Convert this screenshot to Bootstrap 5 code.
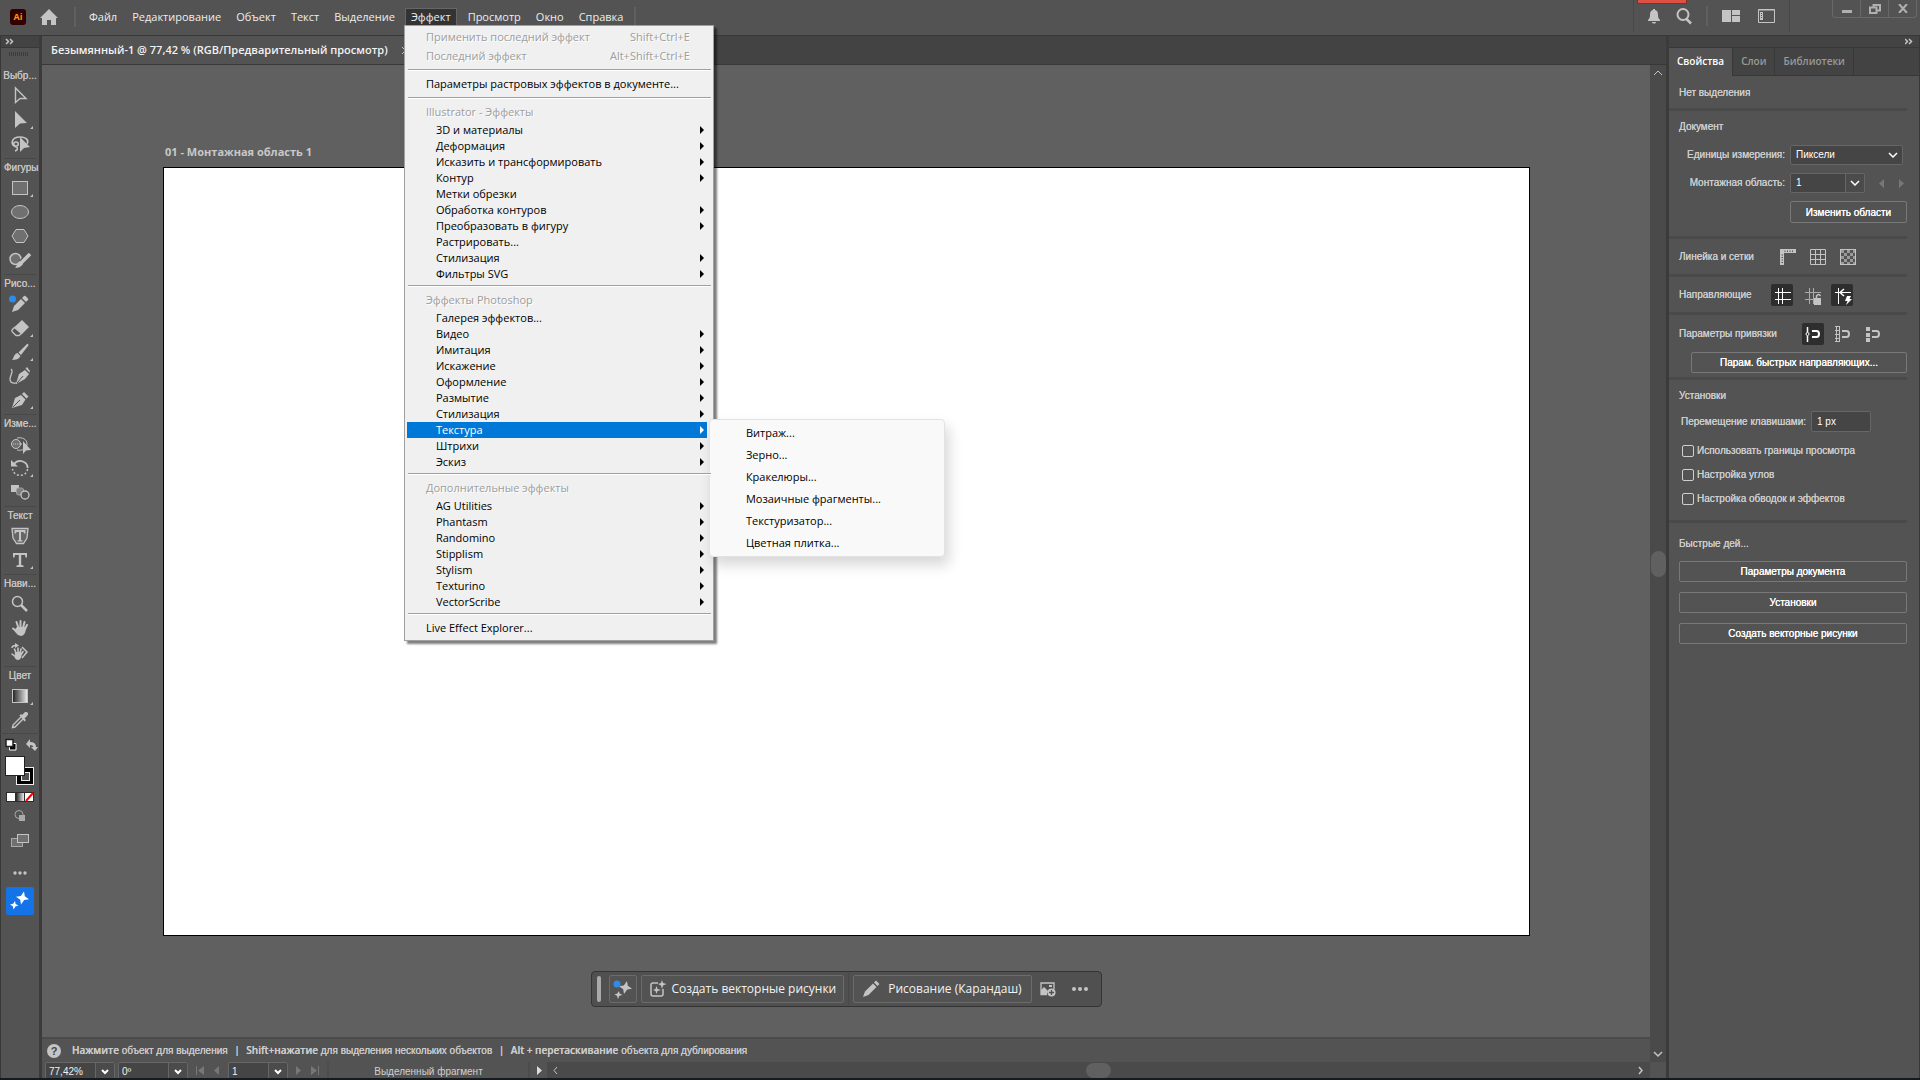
<!DOCTYPE html>
<html lang="ru">
<head>
<meta charset="utf-8">
<meta name="viewport" content="width=device-width, initial-scale=1">
<title>Безымянный-1 @ 77,42 %</title>
<link rel="stylesheet" href="https://cdn.jsdelivr.net/npm/bootstrap@5.3.0/dist/css/bootstrap.min.css">
<style>
:root{--ui:"Open Sans","Noto Sans",sans-serif;--small:"Liberation Sans",Arial,sans-serif;--face:#535353;--dark:#434343;--line:#383838;--ink:#c4c4c4}
body{font:11px/16px var(--ui);background:var(--face);color:var(--ink);height:100vh;overflow:hidden;border-bottom:2px solid #141a1e}
svg{display:block;flex:none}
a{color:inherit;text-decoration:none}
button,select,input{font:inherit;color:inherit;border-radius:0}
.plain-btn{background:none;border:0;padding:0}
.ink{fill:var(--ink)}
.wire{fill:none;stroke:var(--ink)}

/* top bar */
.topbar{height:36px;padding:0 3px 2px 10px;border-bottom:1px solid var(--line);flex-wrap:nowrap}
.home-btn{margin-left:14px}
.nav-main{margin-left:5px}
.topbar .nav-link{color:#eee;padding:0 7px;height:17px;line-height:15px;border:1px solid transparent;margin-right:-1px}
.topbar .nav-link.active{background:#333;border-color:#666;border-bottom:0;padding:0 5px;margin:0 3px 0 3px}
.vline{width:2px;height:20px;background:#606060}
.vline.tall{width:1px;height:32px;background:#484848}
.right-tools{gap:14px}
.right-tools .vline.tall:last-of-type{margin-left:-4px}
.alert-strip{position:absolute;width:50px;height:4px;background:#dc5142;border:1px solid #8f2a20;border-top:0;left:4px;top:0}
.win-btns{height:18px;border:1px solid #696969;border-top:0;border-radius:0 0 4px 4px;margin-left:28px}
.win-btns button{width:27px}
.win-btns button+button{border-left:1px solid #696969;width:28px}

/* effect menu */
.fx-menu{position:absolute;top:17px;left:2px;z-index:20;width:310px;background:#f0f0f0;color:#000;border:1px solid #a0a0a0;padding:2px 6px 2px 2px;box-shadow:3px 3px 2px rgba(0,0,0,.5);list-style:none;margin:0}
.fx-menu li{position:relative}
.fx-menu a{display:flex;justify-content:space-between;align-items:center;height:16px;line-height:16px;padding:0 3px 0 29px;color:#000}
.fx-menu a.root,.fx-menu .cap{padding-left:19px;height:20px;line-height:20px}
.fx-menu .cap,.fx-menu a.off{color:#9d9d9d;text-shadow:1px 1px #fff}
.fx-menu a.off{height:19px;align-items:flex-start;padding:1px 17px 0 19px}
.fx-menu .rule{height:8px;margin:0 -4px 0 1px;padding-top:3px}
.fx-menu .rule::after{content:"";display:block;height:2px;background:#a0a0a0;border-bottom:1px solid #fff}
.fx-menu .sub::after{content:"";border:4px solid transparent;border-left-color:#000;border-right:0}
.fx-menu a.hot{background:#0078d7;color:#fff}
.fx-menu a.hot::after{border-left-color:#fff}
.fx-sub{position:absolute;left:calc(100% + 2px);top:-3px;width:236px;background:#f9f9f9;border:1px solid #e2e2e2;border-radius:4px;padding:2px 0;box-shadow:4px 8px 14px rgba(0,0,0,.16);list-style:none}
.fx-sub a{height:22px;line-height:22px;padding-left:36px}

/* tool column */
.toolcol{width:42px;border-left:1px solid var(--line);border-right:3px solid #3b3b3b}
.strip{height:12px;background:var(--dark);border-bottom:1px solid var(--line)}
.grip{height:4px;width:20px;background:repeating-linear-gradient(90deg,#3c3c3c 0 1px,transparent 1px 2px)}
.tgroup{margin:0 -1px}
.tgroup h2{font:10px/17px var(--small);margin:2px 4px 0;border-top:1px solid #484848;text-align:center;text-shadow:0 0 currentColor;white-space:nowrap}
.tgroup.first h2{border-top:0;margin:12px 0 0;line-height:16px}
.tgroup button{display:block;width:40px;height:24px}
.swatches{margin-top:1px;border-top:1px solid #484848}
.ai-btn{width:28px;height:28px;background:#1473e6;border:0;border-radius:2px;padding:0;margin-left:5px}

/* document */
.tabbar{height:29px;background:var(--dark);border-bottom:1px solid var(--line)}
.doc-tab{background:var(--face);width:374px;color:#f2f2f2;font-weight:600;padding-left:9px;gap:14px}
.canvas{background:#606060;padding:79px 120px 30px 121px}
.ab-label{height:16px;margin:0 0 7px 2px;font-weight:700;color:#c8c8c8}
.artboard{background:#fff;border:1px solid #000}
.taskbar{height:36px;margin-top:35px;background:#505050;border:1px solid #343434;border-radius:4px;padding:0 13px 0 5px;color:#f2f2f2;font-size:12px}
.taskbar .tb{height:28px;background:#535353;border:1px solid #6b6b6b;border-radius:2px;padding:0 9px}
.taskbar .tb.slim{padding:0 3px}
.taskbar .tb.mid{padding:0 7px}
.vscroll{width:16px;background:#4a4a4a;padding:4px 0 2px}
.thumb-v{width:15px;height:26px;border-radius:8px;background:#606060}
.helpbar{height:25px;border-top:2px solid #4a4a4a;font:10px/12px var(--small);color:#cacaca;padding-left:4px;text-shadow:0 0 currentColor}
.helpbar svg{margin-right:2px}
.helpbar b{font-family:var(--ui);font-weight:600}
.statusbar{height:16px;overflow:hidden;font:10px/12px var(--small);color:#f0f0f0}
.status-fields{padding-left:3px;gap:3px}
.fieldset{height:20px;border:1px solid #666;border-radius:2px;background:#454545;overflow:hidden;position:relative}
.fieldset select,.fieldset input{appearance:none;background:none;border:0;outline:0;padding:0 20px 0 5px;width:100%;height:100%}
.fieldset .arr{position:absolute;right:0;top:0;width:19px;height:100%;border-left:1px solid #666;background:#4b4b4b;pointer-events:none;display:flex;align-items:center;justify-content:center}
.fieldset.flush .arr{border:0;background:none}
.statusbar .fieldset select{padding-left:3px}
.w-zoom{width:70px}.w-rot{width:70px}.w-page{width:60px}
.frag{width:203px;border:1px solid #4c4c4c;border-width:0 2px;height:20px;line-height:20px;color:#d0d0d0;text-align:center}
.hscroll{background:#4a4a4a;height:16px;padding:0 5px}
.thumb-h{width:25px;height:15px;border-radius:8px;background:#606060}
.corner{width:16px}

/* properties panel */
.props{width:254px;border-left:3px solid #3b3b3b;border-right:1px solid var(--line);font:10px/14px var(--small)}
.props .strip{padding-right:6px}
.ptabs{height:28px;background:var(--dark);font:600 10px/26px var(--ui);color:#9a9a9a;border-bottom:1px solid var(--line)}
.ptabs a{padding:0 8px;border-right:1px solid var(--line)}
.ptabs a.on{background:var(--face);color:#fff;height:28px}
.pbody{margin-right:12px;text-shadow:0 0 currentColor;color:#cdcdcd}
.psec{padding-left:10px;border-bottom:3px solid #4a4a4a}
.psec h2{font:inherit;margin:0;height:14px}
.lbl{width:106px;text-align:right;margin-right:5px;white-space:nowrap}
.psec .fieldset{color:#fff}
.obtn{background:none;border:1px solid #787878;border-radius:2px;color:#fff;height:21px;padding:0;text-shadow:inherit;line-height:19px}
.tog{width:22px;height:22px;border-radius:2px}
.tog.on{background:#2e2e2e}
.chk{height:24px;display:flex;align-items:center;gap:3px;margin:0 0 0 3px}
.chk input{appearance:none;width:12px;height:12px;border:1px solid #cfcfcf;border-radius:2px;margin:0}
.sec-sel{padding-top:10px;padding-bottom:8px}
.sec-doc{padding-top:9px;padding-bottom:13px}
.sec-doc h2{margin-bottom:11px}
.sec-doc>div+div{margin-top:8px}
.abfield{width:75px}
.wide-b{width:117px;height:22px}
.irow{height:38px}
.icons-a{margin-right:48px}
.icons-b{margin-right:54px}
.icons-c{margin-right:23px}
.snaprow{height:37px}
.snap-b{width:216px}
.sec-snap{padding-bottom:4px}
.sec-set{padding-top:9px;padding-bottom:9px}
.lbl.kb{width:127px;margin-right:5px}
.kbf{width:60px;height:21px}
.chks{padding-top:7px}
.quick{padding-top:14px;gap:10px}
</style>
<script src="https://cdn.jsdelivr.net/npm/bootstrap@5.3.0/dist/js/bootstrap.bundle.min.js"></script>
</head>
<body class="d-flex flex-column">

<header class="topbar navbar d-flex align-items-center justify-content-start">
  <svg width="16" height="16" viewBox="0 0 16 16" role="img" aria-label="Ai"><rect width="16" height="16" rx="3" fill="#330000"/><text x="8" y="11" text-anchor="middle" font-family="Open Sans" font-weight="700" font-size="9" fill="#ff9a00">Ai</text></svg>
  <button class="plain-btn home-btn" aria-label="Главная"><svg width="18" height="16" viewBox="0 0 18 16"><path class="ink" d="M9 0L18 9H16V16H11V11H7V16H2V9H0Z"/></svg></button>
  <div class="vline ms-3"></div>
  <nav class="d-flex nav-main" aria-label="Меню">
    <a class="nav-link" href="#">Файл</a>
    <a class="nav-link" href="#">Редактирование</a>
    <a class="nav-link" href="#">Объект</a>
    <a class="nav-link" href="#">Текст</a>
    <a class="nav-link" href="#">Выделение</a>
    <div class="position-relative">
      <a class="nav-link active" href="#">Эффект</a>
      <ul class="fx-menu">
        <li><a class="off" href="#"><span>Применить последний эффект</span><span>Shift+Ctrl+E</span></a></li>
        <li><a class="off" href="#"><span>Последний эффект</span><span>Alt+Shift+Ctrl+E</span></a></li>
        <li class="rule"></li>
        <li><a class="root" href="#">Параметры растровых эффектов в документе...</a></li>
        <li class="rule"></li>
        <li class="cap">Illustrator - Эффекты</li>
        <li><a class="sub" href="#">3D и материалы</a></li>
        <li><a class="sub" href="#">Деформация</a></li>
        <li><a class="sub" href="#">Исказить и трансформировать</a></li>
        <li><a class="sub" href="#">Контур</a></li>
        <li><a href="#">Метки обрезки</a></li>
        <li><a class="sub" href="#">Обработка контуров</a></li>
        <li><a class="sub" href="#">Преобразовать в фигуру</a></li>
        <li><a href="#">Растрировать...</a></li>
        <li><a class="sub" href="#">Стилизация</a></li>
        <li><a class="sub" href="#">Фильтры SVG</a></li>
        <li class="rule"></li>
        <li class="cap">Эффекты Photoshop</li>
        <li><a href="#">Галерея эффектов...</a></li>
        <li><a class="sub" href="#">Видео</a></li>
        <li><a class="sub" href="#">Имитация</a></li>
        <li><a class="sub" href="#">Искажение</a></li>
        <li><a class="sub" href="#">Оформление</a></li>
        <li><a class="sub" href="#">Размытие</a></li>
        <li><a class="sub" href="#">Стилизация</a></li>
        <li><a class="sub hot" href="#">Текстура</a>
          <ul class="fx-sub">
            <li><a href="#">Витраж...</a></li>
            <li><a href="#">Зерно...</a></li>
            <li><a href="#">Кракелюры...</a></li>
            <li><a href="#">Мозаичные фрагменты...</a></li>
            <li><a href="#">Текстуризатор...</a></li>
            <li><a href="#">Цветная плитка...</a></li>
          </ul>
        </li>
        <li><a class="sub" href="#">Штрихи</a></li>
        <li><a class="sub" href="#">Эскиз</a></li>
        <li class="rule"></li>
        <li class="cap">Дополнительные эффекты</li>
        <li><a class="sub" href="#">AG Utilities</a></li>
        <li><a class="sub" href="#">Phantasm</a></li>
        <li><a class="sub" href="#">Randomino</a></li>
        <li><a class="sub" href="#">Stipplism</a></li>
        <li><a class="sub" href="#">Stylism</a></li>
        <li><a class="sub" href="#">Texturino</a></li>
        <li><a class="sub" href="#">VectorScribe</a></li>
        <li class="rule"></li>
        <li><a class="root" href="#">Live Effect Explorer...</a></li>
      </ul>
    </div>
    <a class="nav-link" href="#">Просмотр</a>
    <a class="nav-link" href="#">Окно</a>
    <a class="nav-link" href="#">Справка</a>
  </nav>
  <div class="vline ms-1"></div>
  <div class="right-tools d-flex align-items-center align-self-start ms-auto position-relative">
    <span class="alert-strip"></span>
    <div class="vline tall"></div>
    <button class="plain-btn" aria-label="Уведомления"><svg width="12" height="15" viewBox="0 0 12 15"><path class="ink" d="M5 0H7V1C9 1.5 10 3 10 5.5C10 8.500 10.500 9.500 12 11V12H0V11C1.500 9.500 2 8.500 2 5.500C2 3 3 1.500 5 1ZM4 13H8C8 15 4 15 4 13Z"/></svg></button>
    <button class="plain-btn" aria-label="Поиск"><svg width="18" height="17" viewBox="0 0 18 17"><circle class="wire" cx="9" cy="6.500" r="5.500" stroke-width="2"/><path class="wire" d="M12 10.500L17 15.500" stroke-width="2.500"/></svg></button>
    <div class="vline"></div>
    <button class="plain-btn" aria-label="Упорядочить документы"><svg width="18" height="12" viewBox="0 0 18 12"><path class="ink" d="M0 0H9V12H0ZM10 0H18V5H10ZM10 6H18V12H10Z"/></svg></button>
    <button class="plain-btn ps-1" aria-label="Рабочая среда"><svg width="17" height="14" viewBox="0 0 17 14"><path class="wire" d="M.5 .5H16.500V13.500H.5Z" stroke-width="1"/><path class="wire" d="M.5 1H16.500"/><path class="ink" d="M2 3H5V11H2Z"/><path d="M3 4h1v1h-1zM3 6h1v1h-1zM3 8h1v1h-1z" fill="#535353"/></svg></button>
    <div class="vline tall"></div>
    <div class="win-btns d-flex align-self-start">
      <button class="plain-btn d-flex justify-content-center align-items-center" aria-label="Свернуть"><svg width="10" height="10" viewBox="0 0 10 10"><path fill="#b0b0b0" d="M0 6H10V9H0Z"/></svg></button>
      <button class="plain-btn d-flex justify-content-center align-items-center" aria-label="Окно"><svg width="12" height="10" viewBox="0 0 12 10"><path d="M4.500 3V1H11V6.500H7.500M1 3.500H7.500V9H1Z" fill="none" stroke="#b0b0b0" stroke-width="2"/></svg></button>
      <button class="plain-btn d-flex justify-content-center align-items-center" aria-label="Закрыть"><svg width="10" height="9" viewBox="0 0 10 9"><path d="M1 0L9 9M9 0L1 9" fill="none" stroke="#b0b0b0" stroke-width="2"/></svg></button>
    </div>
  </div>
</header>

<div class="d-flex flex-grow-1 overflow-hidden">

  <aside class="toolcol flex-shrink-0 d-flex flex-column">
    <div class="strip"><svg width="14" height="11" viewBox="0 0 14 11"><path class="wire" d="M5 3L7.500 5.500 5 8M9 3L11.500 5.500 9 8" stroke-width="1.500"/></svg></div>
    <div class="grip mt-1 ms-2"></div>
    <section class="tgroup first"><h2>Выбр...</h2>
      <button class="plain-btn" aria-label="Выделение"><svg width="40" height="24"><path class="wire" stroke-width="1.400" d="M15.500 4V18.500L20 14.500H26Z"/></svg></button>
      <button class="plain-btn" aria-label="Прямое выделение"><svg width="40" height="24"><path class="ink" d="M15 3V20L20 15.500 27 15ZM33 18v3h-3z"/></svg></button>
      <button class="plain-btn" aria-label="Лассо"><svg width="40" height="24"><path class="wire" stroke-width="1.600" d="M16 15C10 13 11 5 20 5C27 5 29 9 27 12M16 10C13 10 13 14 16 14C19 14 19 10 16 10M16 14C18 16 18 18 15 19"/><path class="ink" d="M20 5V20L24 16 30 15Z"/></svg></button>
    </section>
    <section class="tgroup"><h2>Фигуры</h2>
      <button class="plain-btn" aria-label="Прямоугольник"><svg width="40" height="24"><rect x="12.500" y="5.500" width="15" height="13" fill="#707070" stroke="#c4c4c4"/><path class="ink" d="M33 18v3h-3z"/></svg></button>
      <button class="plain-btn" aria-label="Эллипс"><svg width="40" height="24"><ellipse cx="20" cy="12" rx="8.500" ry="6.500" fill="#707070" stroke="#c4c4c4"/></svg></button>
      <button class="plain-btn" aria-label="Многоугольник"><svg width="40" height="24"><path d="M12 12L16 5.500H24L28 12 24 18.500H16Z" fill="#707070" stroke="#c4c4c4"/></svg></button>
      <button class="plain-btn" aria-label="Shaper"><svg width="40" height="24"><circle cx="15.500" cy="11" r="5.500" fill="#707070" stroke="#c4c4c4" stroke-width="1.500"/><path d="M30 6L21 15" stroke="#535353" stroke-width="6"/><path d="M30 6L21 15" stroke="#c4c4c4" stroke-width="3.500"/><path class="ink" d="M20 13L23 16C21 19 18 20 15 20C17 18 17 15 20 13Z"/></svg></button>
    </section>
    <section class="tgroup"><h2>Рисо...</h2>
      <button class="plain-btn" aria-label="Карандаш"><svg width="40" height="24"><path class="ink" d="M12 20L14 14 21 7 25 11 18 18ZM22 6L24 4Q25 3.500 26 4.500L28 6.500Q28.500 7.500 28 8L26 10Z"/><circle cx="12.500" cy="7" r="3.500" fill="#2d8ceb"/></svg></button>
      <button class="plain-btn" aria-label="Ластик"><svg width="40" height="24"><path class="ink" d="M22 4L29 11 22 18 14.500 11Z"/><path class="wire" stroke-width="1.300" d="M14.500 11.500L12 14Q11.500 15 12.500 16L16 19.500H19L21.500 17.500Z"/><path class="ink" d="M33 18v3h-3z"/></svg></button>
      <button class="plain-btn" aria-label="Кисть"><svg width="40" height="24"><path class="ink" d="M28 4Q29 5 28 6L21 15 18.500 12.500 26.500 4.500Q27.500 3.500 28 4ZM17.500 13L20.500 16C19 19 16 20 12 20C14 18 13.500 14 17.500 13ZM33 18v3h-3z"/></svg></button>
      <button class="plain-btn" aria-label="Кривизна"><svg width="40" height="24"><path class="ink" d="M16 20L19 10 25 6 29 10 25 15ZM25.500 4.500L27 3 30 7 29.500 8.500Z"/><path d="M17 19L23 12" stroke="#535353"/><path class="wire" stroke-width="1.300" d="M11 5C15 8 7 14 11 18C13 20 15 19 17 19"/></svg></button>
      <button class="plain-btn" aria-label="Перо"><svg width="40" height="24"><path class="ink" d="M12 20L15 10 21 7 25.500 11.500 22 17ZM22 6L24 4 28.500 8.500 26.500 10.500ZM33 18v3h-3z"/><path d="M13 19L20 12" stroke="#535353"/></svg></button>
    </section>
    <section class="tgroup"><h2>Изме...</h2>
      <button class="plain-btn" aria-label="Создание фигур"><svg width="40" height="24"><circle cx="16" cy="12" r="4.500" fill="#707070" stroke="#c4c4c4"/><path class="wire" d="M17 6C22 5 27 7 27 12C27 17 22 19 17 18"/><path class="wire" stroke-dasharray="1 1" d="M13 12H23"/><path class="ink" d="M23 9V22L26 18.500 31 18Z"/></svg></button>
      <button class="plain-btn" aria-label="Поворот"><svg width="40" height="24"><path class="wire" stroke-width="1.800" d="M14 8C19 2 28 6 27.500 12"/><path class="wire" stroke-width="1.500" stroke-dasharray="2 2" d="M27.500 13C27 21 14 22 12.500 13"/><path class="ink" d="M11 4V10.500H18ZM33 18v3h-3z"/></svg></button>
      <button class="plain-btn" aria-label="Переход"><svg width="40" height="24"><path class="ink" d="M11 5H19V12H11Z"/><rect x="16.500" y="8" width="7" height="7" rx="2" fill="#808080" stroke="#a0a0a0"/><circle cx="25" cy="15" r="4" fill="#535353" stroke="#c4c4c4" stroke-width="1.300"/></svg></button>
    </section>
    <section class="tgroup"><h2>Текст</h2>
      <button class="plain-btn" aria-label="Изменение текста"><svg width="40" height="24"><path d="M12 4.500H28L27 14 23.500 19.500H16.500L13 14Z" fill="#666" stroke="#c4c4c4" stroke-width="1.300"/><path class="ink" d="M14.500 6H25.500V9.500H24L23.500 8H21V16L22.500 16.500V17.500H17.500V16.500L19 16V8H16.500L16 9.500H14.500Z"/></svg></button>
      <button class="plain-btn" aria-label="Текст"><svg width="40" height="24"><path class="ink" d="M13 5H27V9.500H25.500L25 7H21.200V17L23.500 17.500V19H16.500V17.500L18.800 17V7H15L14.500 9.500H13ZM33 18v3h-3z"/></svg></button>
    </section>
    <section class="tgroup"><h2>Нави...</h2>
      <button class="plain-btn" aria-label="Масштаб"><svg width="40" height="24"><circle class="wire" cx="17.500" cy="9.500" r="5" stroke-width="1.500"/><path class="wire" stroke-width="2.500" d="M21 13L27 19"/></svg></button>
      <button class="plain-btn" aria-label="Рука"><svg width="40" height="24"><path d="M18.500 12L16.500 6M20.500 11L20.500 5M23 12L24.500 6M25 13L27 9M16.500 15L13 12.500" stroke="#c4c4c4" stroke-width="2" stroke-linecap="round"/><path class="ink" d="M17 11H25L26 13Q25 20 21 20Q18 20 16 17L14 14.500Z"/></svg></button>
      <button class="plain-btn" aria-label="Поворот вида"><svg width="40" height="24"><path d="M16 13L14.500 9M18 12V8M20 13L21 9M21.500 14L23 11.500M14.500 16L12 14" stroke="#c4c4c4" stroke-width="1.600" stroke-linecap="round"/><path class="ink" d="M15 12H21L22 14Q21 20 18 20Q16 20 14.500 17.500ZM15 3L19 5.500 15 8Z"/><path class="wire" stroke-width="1.500" d="M12 8Q12 5.500 16 5.500M22 7L27 12 22 18"/></svg></button>
    </section>
    <section class="tgroup"><h2>Цвет</h2>
      <button class="plain-btn" aria-label="Градиент"><svg width="40" height="24"><defs><linearGradient id="gr"><stop stop-color="#222"/><stop offset="1" stop-color="#eee"/></linearGradient></defs><rect x="12.500" y="5.500" width="15" height="13" fill="url(#gr)" stroke="#c4c4c4"/><path class="ink" d="M33 18v3h-3z"/></svg></button>
      <button class="plain-btn" aria-label="Пипетка"><svg width="40" height="24"><path class="wire" stroke-width="1.400" d="M21 9L13 17 12.500 19.500 15 19 23 11"/><path class="ink" d="M19.500 7.500L21 6 22 7 25 4Q27 3.500 28 5Q28.500 6.500 27 8L24.500 10.500 26 12 24.500 13.500Z"/></svg></button>
    </section>
    <section class="tgroup swatches">
      <svg width="40" height="153" viewBox="0 735 40 153" role="img" aria-label="Заливка и обводка">
        <path d="M9.500 744.500H16V751H9.500Z" fill="#000" stroke="#fff"/><path d="M6 740.500H13V747.500H6Z" fill="#fff" stroke="#222" stroke-width="1.500"/>
        <path class="ink" d="M26 745L30 740V743Q36 743 36 748H38L35 752 31 748H33.500Q33 746 30 746V749Z"/>
        <rect x="16.500" y="768.500" width="17" height="17" fill="#000" stroke="#eee"/><rect x="21.500" y="773.500" width="8" height="8" fill="#535353" stroke="#eee"/>
        <rect x="5.500" y="757.500" width="19" height="19" fill="#fff" stroke="#222"/>
        <rect x="6" y="793" width="28" height="10" fill="#2c2c2c"/><path fill="#fff" d="M7 794h8v8H7zM25 794h8v8h-8z"/><rect x="16" y="794" width="8" height="8" fill="url(#gr)"/><path d="M26 802L33 794" stroke="red" stroke-width="2"/>
        <circle cx="19" cy="815.500" r="4" fill="none" stroke="#aaa"/><rect x="19" y="816" width="6" height="6" fill="#aaa"/>
        <rect x="11.500" y="839.500" width="11" height="8" fill="#707070" stroke="#aaa"/><rect x="17.500" y="835.500" width="11" height="8" fill="#707070" stroke="#c4c4c4"/>
        <g fill="#c4c4c4"><circle cx="15" cy="874" r="1.700"/><circle cx="20" cy="874" r="1.700"/><circle cx="25" cy="874" r="1.700"/></g>
      </svg>
    </section>
    <button class="ai-btn" aria-label="Генерация"><svg width="28" height="28" viewBox="0 0 28 28"><path fill="#fff" d="M18 4.500L18.800 9.200 23 12.200 18.200 13 15 17.500 14.200 12.800 10 9.800 14.800 9ZM9 14L9.600 17 12.500 18.600 9.400 19.400 7.500 22.500 6.800 19.300 4 17.500 7.200 16.800Z"/></svg></button>
  </aside>

  <main class="flex-grow-1 d-flex flex-column overflow-hidden">
    <div class="tabbar d-flex flex-shrink-0">
      <div class="doc-tab d-flex align-items-center"><span>Безымянный-1 @ 77,42 % (RGB/Предварительный просмотр)</span><svg width="7" height="7" viewBox="0 0 7 7"><path class="wire" d="M0 0L7 7M7 0L0 7"/></svg></div>
    </div>
    <div class="d-flex flex-grow-1">
      <div class="flex-grow-1 d-flex flex-column">
        <div class="canvas flex-grow-1 d-flex flex-column">
          <div class="ab-label">01 - Монтажная область 1</div>
          <div class="artboard flex-grow-1"></div>
          <div class="taskbar d-flex align-items-center align-self-center">
            <svg width="4" height="26"><rect width="4" height="26" rx="2" fill="#aaa"/></svg>
            <button class="tb slim ms-2 d-flex align-items-center" aria-label="Контекст"><svg width="20" height="24" viewBox="0 0 20 24"><path class="ink" d="M14 4L14.800 8.700 19 11.700 14.200 12.500 11 17 10.200 12.300 6 9.300 10.800 8.500ZM6 14L6.600 16.500 9.500 18 6.400 18.800 5 22 4 18.800 1.500 17.500 4.300 16.500Z"/><circle cx="4" cy="7" r="3.500" fill="#2d8ceb"/></svg></button>
            <button class="tb mid ms-1 d-flex align-items-center gap-1"><svg width="18" height="18" viewBox="0 0 18 18"><path class="wire" stroke-width="1.500" d="M9 3H4Q2 3 2 5V14Q2 16 4 16H12Q14 16 14 14V9"/><path class="ink" d="M13 0L14 3 17.500 4 14 5.500 13 9 12 5.500 9 4 12 3ZM7.500 6L8.500 9 12 10 8.500 11 7.500 14 6.500 11 4 10 6.500 9Z"/></svg>Создать векторные рисунки</button>
            <div class="vline tall mx-1"></div>
            <button class="tb d-flex align-items-center gap-2"><svg width="17" height="18" viewBox="0 0 17 18"><path class="ink" d="M0 17L2 11.500 10 3.500 13.500 7 5.500 15ZM11 2.500L13 .5 16.500 4 14.500 6Z"/></svg>Рисование (Карандаш)</button>
            <button class="plain-btn ms-2" aria-label="Добавить изображение"><svg width="16" height="15" viewBox="0 0 16 15"><path class="wire" stroke-width="1.300" d="M7 12.500H1V1H14V7"/><path class="ink" d="M1 12V8L4 5 8 9 7 12ZM9 3h3v2H9z"/><circle cx="11.500" cy="10.500" r="4" class="ink"/><path d="M9 10.500H14M11.500 8V13" stroke="#505050" stroke-width="1.300"/></svg></button>
            <button class="plain-btn ms-3" aria-label="Ещё"><svg width="16" height="6"><circle class="ink" cx="2" cy="3" r="2"/><circle class="ink" cx="8" cy="3" r="2"/><circle class="ink" cx="14" cy="3" r="2"/></svg></button>
          </div>
        </div>
        <div class="helpbar d-flex align-items-center gap-2">
          <svg width="16" height="16" viewBox="0 0 16 16"><circle class="ink" cx="8" cy="8" r="7"/><text x="8" y="12" text-anchor="middle" font-size="11" font-weight="700" fill="#444">?</text></svg>
          <span><b>Нажмите</b> объект для выделения</span><span>|</span><span><b>Shift+нажатие</b> для выделения нескольких объектов</span><span>|</span><span><b>Alt + перетаскивание</b> объекта для дублирования</span>
        </div>
      </div>
      <div class="vscroll d-flex flex-column align-items-center justify-content-between">
        <svg width="10" height="8" viewBox="0 0 10 8"><path class="wire" d="M1 6L5 2 9 6"/></svg>
        <div class="thumb-v"></div>
        <svg width="10" height="10" viewBox="0 0 10 10"><path class="wire" d="M1 2L5 6 9 2" stroke-width="1.500"/></svg>
      </div>
    </div>
    <div class="statusbar d-flex flex-shrink-0">
      <div class="status-fields d-flex align-items-start">
        <div class="fieldset w-zoom"><select aria-label="Масштаб"><option>77,42%</option></select><span class="arr"><svg width="8" height="6"><path d="M1 1L4 4 7 1" fill="none" stroke="#fff" stroke-width="2"/></svg></span></div>
        <div class="fieldset w-rot"><select aria-label="Поворот"><option>0º</option></select><span class="arr"><svg width="8" height="6"><path d="M1 1L4 4 7 1" fill="none" stroke="#fff" stroke-width="2"/></svg></span></div>
        <svg width="34" height="16"><path fill="#777" d="M5 4h1v9h-1zM13 4V13L7 8.500ZM28 4V13L23 8.500Z"/></svg>
        <div class="fieldset w-page"><select aria-label="Монтажная область"><option>1</option></select><span class="arr"><svg width="8" height="6"><path d="M1 1L4 4 7 1" fill="none" stroke="#fff" stroke-width="2"/></svg></span></div>
        <svg width="33" height="16"><path fill="#777" d="M5 4V13L10 8.500ZM20 4V13L26 8.500ZM27 4h1v9h-1z"/></svg>
        <div class="frag">Выделенный фрагмент</div>
        <svg width="14" height="16"><path fill="#ddd" d="M4 4V13L9 8.500Z"/></svg>
      </div>
      <div class="hscroll flex-grow-1 d-flex align-items-center justify-content-between">
        <svg width="7" height="9"><path class="wire" d="M5 1L2 4.500 5 8"/></svg><div class="thumb-h"></div><svg width="8" height="9"><path class="wire" stroke-width="1.500" d="M2 1L5 4.500 2 8"/></svg>
      </div>
      <div class="corner"></div>
    </div>
  </main>

  <aside class="props flex-shrink-0">
    <div class="strip d-flex justify-content-end"><svg width="8" height="11" viewBox="0 0 8 11"><path class="wire" d="M0 3L2.500 5.500 0 8M4 3L6.500 5.500 4 8" stroke-width="1.500"/></svg></div>
    <nav class="ptabs d-flex"><a class="on" href="#">Свойства</a><a href="#">Слои</a><a href="#">Библиотеки</a></nav>
    <div class="pbody">
      <section class="psec sec-sel"><h2>Нет выделения</h2></section>
      <section class="psec sec-doc">
        <h2>Документ</h2>
        <div class="d-flex align-items-center"><label class="lbl" for="u">Единицы измерения:</label><div class="fieldset flush flex-grow-1 me-1"><select id="u"><option>Пиксели</option></select><span class="arr"><svg width="10" height="6"><path d="M1 1L5 5 9 1" fill="none" stroke="#fff" stroke-width="1.500"/></svg></span></div></div>
        <div class="d-flex align-items-center"><label class="lbl" for="ab">Монтажная область:</label><div class="fieldset abfield"><select id="ab"><option>1</option></select><span class="arr"><svg width="10" height="6"><path d="M1 1L5 5 9 1" fill="none" stroke="#fff" stroke-width="1.500"/></svg></span></div>
          <svg class="ms-auto" width="28" height="9"><path fill="#777" d="M5 0V9L0 4.500ZM20 0V9L25 4.500Z"/></svg></div>
        <div class="d-flex justify-content-end"><button class="obtn wide-b">Изменить области</button></div>
      </section>
      <section class="psec irow d-flex align-items-center"><h2>Линейка и сетки</h2>
        <div class="d-flex ms-auto gap-2 icons-a">
          <button class="tog plain-btn" aria-label="Линейки"><svg width="22" height="22"><path class="ink" d="M3 3H19V7H7V19H3Z"/><path d="M8 6V4.500M10.500 6V4.500M13 6V4.500M15.500 6V4.500M6 9H4.500M6 11.500H4.500M6 14H4.500M6 16.500H4.500" stroke="#535353"/></svg></button>
          <button class="tog plain-btn" aria-label="Сетка"><svg width="22" height="22"><path class="wire" d="M3.500 3.500H18.500V18.500H3.500ZM8.500 3V19M13.500 3V19M3 8.500H19M3 13.500H19"/></svg></button>
          <button class="tog plain-btn" aria-label="Прозрачность"><svg width="22" height="22"><rect class="wire" x="3.500" y="3.500" width="15" height="15"/><path fill="#999" d="M4 4h3v3H4zM10 4h3v3h-3zM7 7h3v3H7zM13 7h3v3h-3zM4 10h3v3H4zM10 10h3v3h-3zM7 13h3v3H7zM13 13h3v3h-3zM16 4h2v3h-2zM16 10h2v3h-2zM4 16h3v2H4zM10 16h3v2h-3zM16 16h2v2h-2z"/></svg></button>
        </div></section>
      <section class="psec irow d-flex align-items-center"><h2>Направляющие</h2>
        <div class="d-flex ms-auto gap-2 icons-b">
          <button class="tog plain-btn on" aria-label="Показать"><svg width="22" height="22"><path stroke="#fff" d="M4 8.500H20M4 15.500H20M7.500 4V20M11.500 4V20"/></svg></button>
          <button class="tog plain-btn" aria-label="Закрепить"><svg width="22" height="22"><path stroke="#aaa" d="M4 8.500H20M4 15.500H12M8.500 4V20M12.500 4V20"/><path class="ink" d="M13 14H20V21H13Z"/><path class="wire" stroke-width="1.500" d="M15.500 14V12Q17.500 9 19.500 12"/></svg></button>
          <button class="tog plain-btn on" aria-label="Быстрые"><svg width="22" height="22"><path stroke="#fff" fill="none" d="M7.500 4V20M4 8.500H20"/><path stroke="#fff" fill="none" stroke-width="1.500" d="M13 5L9 8.500 13 12"/><path fill="#fff" d="M16 12H20L18.500 15H21L15 21 16.500 17H14Z"/></svg></button>
        </div></section>
      <section class="psec sec-snap">
        <div class="d-flex align-items-center snaprow"><h2>Параметры привязки</h2>
          <div class="d-flex ms-auto gap-2 icons-c">
            <button class="tog plain-btn on" aria-label="К точке"><svg width="22" height="22"><path stroke="#fff" fill="none" stroke-width="1.500" d="M5.500 4V9.500M5.500 13V19"/><circle cx="5.500" cy="11" r="1.500" fill="none" stroke="#fff"/><path d="M10 8H14.500Q17 8 17 11Q17 14 14.500 14H10" fill="none" stroke="#fff" stroke-width="2"/></svg></button>
            <button class="tog plain-btn" aria-label="К сетке"><svg width="22" height="22"><path class="wire" d="M4.500 3V19M7.500 3V19M3 3.500H8M3 7.500H8M3 11.500H8M3 15.500H8M3 18.500H8"/><path d="M10 8H14.500Q17 8 17 11Q17 14 14.500 14H10" class="wire" stroke-width="2"/></svg></button>
            <button class="tog plain-btn" aria-label="К пикселу"><svg width="22" height="22"><path class="ink" d="M4 4h4v4H4zM4 10h4v4H4zM4 15h4v4H4z"/><path d="M10 8H14.500Q17 8 17 11Q17 14 14.500 14H10" class="wire" stroke-width="2"/></svg></button>
          </div></div>
        <button class="obtn snap-b d-block ms-auto">Парам. быстрых направляющих...</button>
      </section>
      <section class="psec sec-set">
        <h2>Установки</h2>
        <div class="d-flex align-items-center mt-2"><label class="lbl kb" for="kb">Перемещение клавишами:</label><div class="fieldset kbf"><input id="kb" value="1 px"></div></div>
        <div class="chks">
          <label class="chk"><input type="checkbox">Использовать границы просмотра</label>
          <label class="chk"><input type="checkbox">Настройка углов</label>
          <label class="chk"><input type="checkbox">Настройка обводок и эффектов</label>
        </div>
      </section>
      <section class="psec quick border-0 d-flex flex-column">
        <h2>Быстрые дей...</h2>
        <button class="obtn">Параметры документа</button>
        <button class="obtn">Установки</button>
        <button class="obtn">Создать векторные рисунки</button>
      </section>
    </div>
  </aside>
</div>
</body>
</html>
